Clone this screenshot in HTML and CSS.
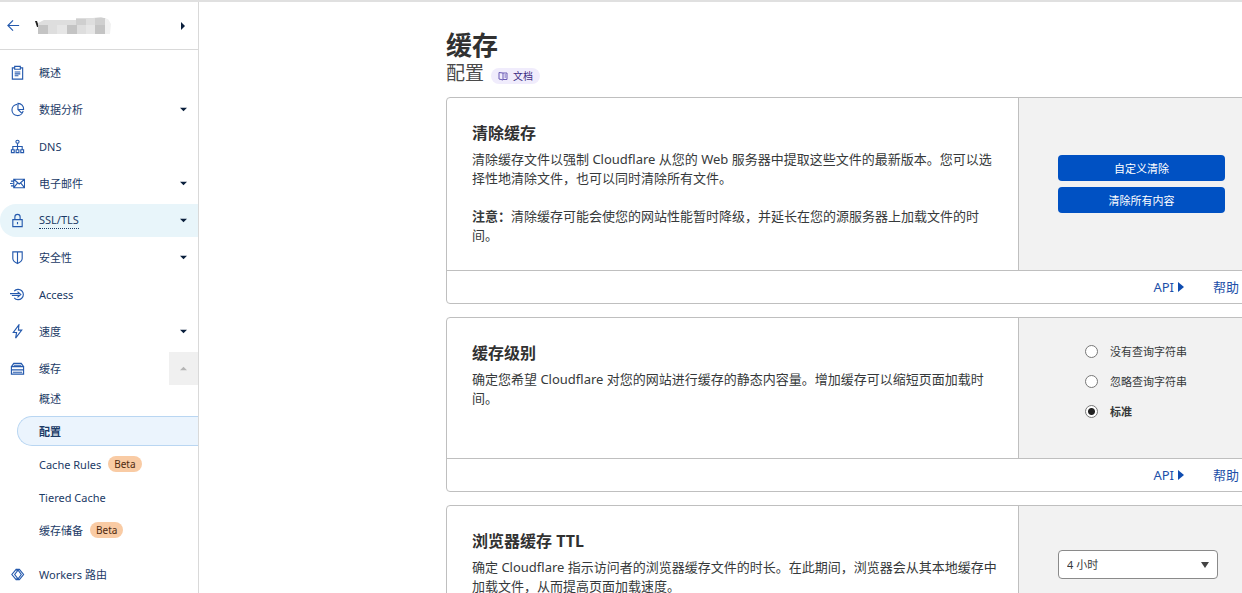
FILE: index.html
```html
<!DOCTYPE html>
<html lang="zh-CN">
<head>
<meta charset="utf-8">
<title>缓存 - 配置</title>
<link rel="stylesheet" href="styles.css">
</head>
<body>
<div class="layout">
  <aside class="sidebar">
    <div class="site">
      <a class="back" href="#" aria-label="返回"><svg class="icon" viewBox="0 0 16 16"><path d="M14 8H2M7.500 2.500 2 8l5.500 5.500"/></svg></a>
      <svg class="site-name" viewBox="0 0 78 20" aria-hidden="true">
        <path fill="#222" d="M1 5h2l1 3v3H3z"/>
        <path fill="#dedede" d="M4 7 10 4h32V2h17l8-1 6 2v15H4z"/>
        <path fill="#c4c4c4" d="M4 9h10v9H4zM33 9h10v9H33zM61 9h10v9H61z"/>
        <path fill="#cfcfcf" d="M42 3h10v6H42zM61 2h10v7H61z"/>
        <path fill="#e6e6e6" d="M23 9h10v9H23zM52 9h9v9h-9z"/>
        <path fill="#f1f1f1" d="M71 3h3l3 5-1 10h-5z"/>
      </svg>
      <button class="toggle" aria-label="切换站点"><svg class="caret" viewBox="0 0 8 8"><path d="M2 0v8l4-4z"/></svg></button>
    </div>
    <nav>
      <ul class="menu">
        <li><a class="item" href="#"><svg class="icon" viewBox="0 0 16 16"><path d="M5 3H2.500v12h11V3H11M5 1.500h6v3H5zM5 7.500h6M5 9.500h6M5 11.500h4"/></svg>概述</a></li>
        <li><a class="item" href="#"><svg class="icon" viewBox="0 0 16 16"><path d="M7.500 2.500a6 6 0 1 0 6.500 7M8.500 1.500a6 6 0 0 1 6 6.500h-6zM8.500 8l4.500 4.500"/></svg>数据分析<svg class="caret" viewBox="0 0 8 8"><path d="M0 2h8L4 6z"/></svg></a></li>
        <li><a class="item" href="#"><svg class="icon" viewBox="0 0 16 16"><circle cx="8" cy="3" r="1.700"/><path d="M8 5v6M3 11V8h10v3M1.500 11.500h3v3h-3zM6.500 11.500h3v3h-3zM11.500 11.500h3v3h-3z"/></svg>DNS</a></li>
        <li><a class="item" href="#"><svg class="icon" viewBox="0 0 16 16"><path d="M4 3.500h11.500v9H4zM4 3.500l5.800 5 5.700-5M15.500 12.500l-4-5M4 12.500l4-5M1 5.500h3M0 8h3M1 10.500h3"/></svg>电子邮件<svg class="caret" viewBox="0 0 8 8"><path d="M0 2h8L4 6z"/></svg></a></li>
        <li><a class="item item-hover" href="#"><svg class="icon" viewBox="0 0 16 16"><path d="M3 7h10v7.500H3zM5.200 7V4.300a2.800 2.800 0 0 1 5.600 0V7M8 9.500v2.500"/></svg><span class="dotted">SSL/TLS</span><svg class="caret" viewBox="0 0 8 8"><path d="M0 2h8L4 6z"/></svg></a></li>
        <li><a class="item" href="#"><svg class="icon" viewBox="0 0 16 16"><path d="M3 2h10v7c0 2.500-2 4-5 5.500C5 13 3 11.500 3 9zM8 2v12.500"/></svg>安全性<svg class="caret" viewBox="0 0 8 8"><path d="M0 2h8L4 6z"/></svg></a></li>
        <li><a class="item" href="#"><svg class="icon" viewBox="0 0 16 16"><path d="M4.500 4.500a5.500 5.500 0 1 1 0 7M0 7h10M2 9h9M8 5l3.500 3-3.500 3"/></svg>Access</a></li>
        <li><a class="item" href="#"><svg class="icon" viewBox="0 0 16 16"><path d="M9.500 1 3.500 9H7l-1 6 6.500-8.500H9z"/></svg>速度<svg class="caret" viewBox="0 0 8 8"><path d="M0 2h8L4 6z"/></svg></a></li>
        <li>
          <a class="item" href="#"><svg class="icon" viewBox="0 0 16 16"><path d="M1.500 6 4 2.500h8L14.500 6M1.500 6h13v3.500h-13zM1.500 9.500h13V14h-13zM3 12h10M4 4.500h8"/></svg>缓存<span class="collapse"><svg class="caret" viewBox="0 0 8 8"><path d="M0 6h8L4 2z"/></svg></span></a>
          <ul class="submenu">
            <li><a class="subitem" href="#">概述</a></li>
            <li><a class="subitem current" href="#">配置</a></li>
            <li><a class="subitem" href="#">Cache Rules<span class="beta">Beta</span></a></li>
            <li><a class="subitem" href="#">Tiered Cache</a></li>
            <li><a class="subitem" href="#">缓存储备<span class="beta">Beta</span></a></li>
          </ul>
        </li>
        <li><a class="item" href="#"><svg class="icon" viewBox="0 0 16 16"><path d="M6.500 2.500 2 8l4.500 5.500L8 12 5 8l3-4zM8 2.500h2L14.500 8 10 13.500H8L12 8z"/></svg>Workers 路由</a></li>
      </ul>
    </nav>
  </aside>

  <main class="main">
    <div class="content">
      <h1 class="title">缓存</h1>
      <div class="subtitle-row">
        <h2 class="subtitle">配置</h2>
        <a class="docs" href="#"><svg class="docs-icon" viewBox="0 0 10 10"><path d="M5 2v7M5 2 1 1.500v6.500l4 1M5 2h4v6.500H5M6.500 4H8M6.500 6H8"/></svg>文档</a>
      </div>

      <section class="card">
        <div class="card-body">
          <div class="card-text">
            <h3 class="card-title">清除缓存</h3>
            <p>清除缓存文件以强制 Cloudflare 从您的 Web 服务器中提取这些文件的最新版本。您可以选择性地清除文件，也可以同时清除所有文件。</p>
            <p><strong>注意：</strong>清除缓存可能会使您的网站性能暂时降级，并延长在您的源服务器上加载文件的时间。</p>
          </div>
          <div class="card-side centered">
            <button class="primary">自定义清除</button>
            <button class="primary">清除所有内容</button>
          </div>
        </div>
        <div class="card-footer">
          <a class="more" href="#">API<svg class="caret" viewBox="0 0 8 10"><path d="M1 0v10l6-5z"/></svg></a>
          <a class="more" href="#">帮助<svg class="caret" viewBox="0 0 8 10"><path d="M1 0v10l6-5z"/></svg></a>
        </div>
      </section>

      <section class="card">
        <div class="card-body">
          <div class="card-text">
            <h3 class="card-title">缓存级别</h3>
            <p>确定您希望 Cloudflare 对您的网站进行缓存的静态内容量。增加缓存可以缩短页面加载时间。</p>
          </div>
          <div class="card-side options">
            <label class="option"><input type="radio" name="level">没有查询字符串</label>
            <label class="option"><input type="radio" name="level">忽略查询字符串</label>
            <label class="option"><input type="radio" name="level" checked><span>标准</span></label>
          </div>
        </div>
        <div class="card-footer">
          <a class="more" href="#">API<svg class="caret" viewBox="0 0 8 10"><path d="M1 0v10l6-5z"/></svg></a>
          <a class="more" href="#">帮助<svg class="caret" viewBox="0 0 8 10"><path d="M1 0v10l6-5z"/></svg></a>
        </div>
      </section>

      <section class="card">
        <div class="card-body">
          <div class="card-text">
            <h3 class="card-title">浏览器缓存 TTL</h3>
            <p>确定 Cloudflare 指示访问者的浏览器缓存文件的时长。在此期间，浏览器会从其本地缓存中加载文件，从而提高页面加载速度。</p>
          </div>
          <div class="card-side">
            <div class="select">
              <select aria-label="浏览器缓存 TTL"><option>4 小时</option></select>
              <svg class="caret" viewBox="0 0 8 8"><path d="M0 1h8L4 7z"/></svg>
            </div>
          </div>
        </div>
      </section>
    </div>
  </main>
</div>
</body>
</html>
```
FILE: styles.css
```css
* { box-sizing: border-box; }
body {
  margin: 0;
  background: #fff;
  color: #36393a;
  font: 13px/19px "Noto Sans", "Noto Sans CJK SC", sans-serif;
}
h1, h2, h3, p, ul { margin: 0; padding: 0; }
ul { list-style: none; }
a { color: inherit; text-decoration: none; }
button, select, input { font: inherit; margin: 0; }

.layout {
  display: flex;
  height: 100vh;
  overflow: hidden;
  border-top: 2px solid #e0e0e0;
}
.sidebar {
  flex: none;
  width: 199px;
  border-right: 1px solid #d9d9d9;
  color: #1b3a66;
  font-size: 11px;
}
.site {
  display: flex;
  align-items: center;
  height: 48px;
  padding: 0 11px 0 6px;
  border-bottom: 1px solid #d9d9d9;
}
.back { display: flex; margin-right: 13px; }
.site-name { width: 78px; height: 20px; }
.toggle {
  display: flex;
  margin-left: auto;
  padding: 0;
  border: 0;
  background: none;
}
.icon {
  flex: none;
  width: 15px;
  height: 15px;
  fill: none;
  stroke: #2459ad;
  stroke-width: 1.2;
}
.caret { flex: none; width: 8px; height: 8px; fill: #0a1f3c; }

.menu { display: flex; flex-direction: column; gap: 4px; padding-top: 6px; }
.item {
  display: flex;
  align-items: center;
  gap: 14px;
  height: 33px;
  padding: 0 11px 0 10px;
  border-radius: 16px 0 0 16px;
}
.item > .caret { margin-left: auto; width: 7px; height: 7px; }
.item-hover { background: #e8f5fa; }
.dotted { line-height: 16px; border-bottom: 1px dotted #1b3a66; }
.collapse {
  display: flex;
  align-items: center;
  justify-content: center;
  align-self: stretch;
  width: 29px;
  margin: 0 -11px 0 auto;
  background: #f0f0f0;
}
.collapse .caret { fill: #b5b5b5; width: 7px; height: 7px; }
.submenu {
  display: flex;
  flex-direction: column;
  gap: 3px;
  margin-top: -2px;
  padding: 0 0 9px 17px;
}
.subitem {
  display: flex;
  align-items: center;
  gap: 7px;
  height: 30px;
  padding-left: 21px;
  border: 1px solid transparent;
  border-right: 0;
  border-radius: 15px 0 0 15px;
}
.current { background: #ebf4fd; border-color: #b9d6f2; font-weight: 700; }
.beta {
  padding: 0 6px;
  border-radius: 8px;
  background: #f9cba4;
  color: #4f2a10;
  font-size: 10px;
  line-height: 16px;
}

.main { flex: 1; min-width: 0; overflow: hidden; padding: 28px 0 0 247px; }
.content { min-width: 818px; }
.title { font-size: 26px; line-height: 30px; color: #313131; }
.subtitle-row { display: flex; align-items: center; gap: 7px; }
.subtitle { font-size: 19px; line-height: 26px; font-weight: 400; color: #4a4a4a; }
.docs {
  display: flex;
  align-items: center;
  gap: 5px;
  margin-top: 5px;
  padding: 0 7px;
  border-radius: 8px;
  background: #f0ecfc;
  color: #3b2a82;
  font-size: 10px;
  line-height: 16px;
}
.docs-icon { width: 10px; height: 10px; fill: none; stroke: #6a5bb5; }

.card {
  margin: 11px 0 13px;
  border: 1px solid #bfbfbf;
  border-radius: 4px;
}
.card + .card { margin-top: 0; }
.card-body { display: flex; min-height: 140px; }
.card-text { flex: 1; padding: 25px 16px 25px 25px; }
.card-text p + p { margin-top: 19px; }
.card-title { margin-bottom: 7px; font-size: 16px; line-height: 20px; color: #313131; }
.card-side {
  flex: none;
  display: flex;
  flex-direction: column;
  gap: 6px;
  width: 245px;
  padding: 44px 38px 0 39px;
  border-left: 1px solid #bfbfbf;
  background: #f2f2f2;
  font-size: 11px;
}
.centered { justify-content: center; padding-top: 0; }
.primary {
  height: 26px;
  padding: 0;
  border: 0;
  border-radius: 4px;
  background: #0051c3;
  color: #fff;
}
.options { gap: 11px; padding: 24px 0 0 66px; }
.option { display: flex; align-items: center; gap: 12px; }
.option input {
  appearance: none;
  width: 13px;
  height: 13px;
  border: 1px solid #777;
  border-radius: 50%;
  background: #fff;
}
.option input:checked { background: radial-gradient(circle, #222 3px, #fff 4px); }
.option input:checked + span { font-weight: 700; }
.select { display: grid; align-items: center; width: 160px; }
.select > * { grid-area: 1 / 1; }
.select select {
  appearance: none;
  height: 29px;
  padding: 0 8px;
  border: 1px solid #8a8a8a;
  border-radius: 4px;
  background: #fff;
  color: #36393a;
}
.select .caret { justify-self: end; margin-right: 9px; fill: #444; pointer-events: none; }

.card-footer {
  display: flex;
  justify-content: flex-end;
  gap: 28px;
  padding: 0 13px 0 0;
  border-top: 1px solid #bfbfbf;
  line-height: 32px;
  color: #1d4fa8;
}
.more { display: flex; align-items: center; gap: 3px; }
.more .caret { height: 10px; fill: #0f4cb0; }
```
